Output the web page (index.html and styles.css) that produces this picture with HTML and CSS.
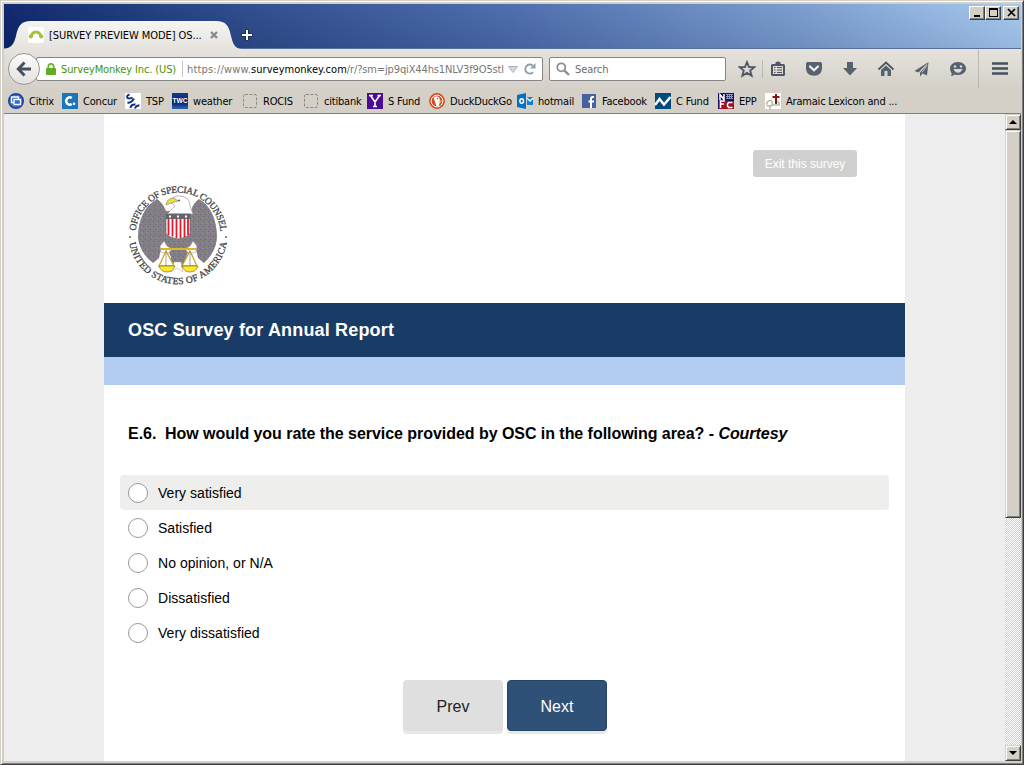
FILE: index.html
```html
<!DOCTYPE html>
<html lang="en">
<head>
<meta charset="utf-8">
<title>OSC Survey for Annual Report</title>
<link rel="stylesheet" href="styles.css">
</head>
<body>
<div class="window">
  <header class="titlebar">
    <div class="tab">
      <svg class="tab-shape" viewBox="0 0 240 28" width="240" height="28"><defs><linearGradient id="tabfill" x1="0" y1="0" x2="0" y2="1"><stop offset="0" stop-color="#f6f5f3"/><stop offset="1" stop-color="#e6e3de"/></linearGradient></defs><path d="M0 28C9 28 12 23 14 15C16 5 19 0 29 0H214C224 0 227 5 229 15C231 23 233 28 240 28Z" fill="url(#tabfill)"/></svg>
      <svg class="tab-icon" viewBox="0 0 16 16" width="16" height="16"><rect width="16" height="16" rx="2" fill="#fff"/><path d="M3 10.500C3.500 3 12.500 3 13 10.500" fill="none" stroke="#a6bf3b" stroke-width="3"/><circle cx="2.700" cy="9.500" r="2" fill="#a6bf3b"/><circle cx="13.300" cy="9.500" r="2" fill="#a6bf3b"/></svg>
      <span class="tab-title">[SURVEY PREVIEW MODE] OS...</span>
      <svg class="tab-close" viewBox="0 0 8 8" width="8" height="8"><path d="M1 1L7 7M7 1L1 7" stroke="#858a8e" stroke-width="2.400"/></svg>
    </div>
    <svg class="new-tab" viewBox="0 0 12 12" width="12" height="12"><path d="M6 .5V11.500M.5 6H11.500" stroke="#1b2c50" stroke-width="4"/><path d="M6 1V11M1 6H11" stroke="#fff" stroke-width="2"/></svg>
    <div class="controls">
      <span class="ctl"><svg viewBox="0 0 12 10" width="12" height="10"><path d="M2 7H8V9H2Z"/></svg></span>
      <span class="ctl"><svg viewBox="0 0 12 10" width="12" height="10"><path d="M1 0H10V9H1ZM2 2V8H9V2Z" fill-rule="evenodd"/></svg></span>
      <span class="ctl ctl-close"><svg viewBox="0 0 12 10" width="12" height="10"><path d="M2 1L9 8M9 1L2 8" stroke="#000" stroke-width="1.700"/></svg></span>
    </div>
  </header>

  <nav class="navbar">
    <button class="back"><svg viewBox="0 0 16 16" width="16" height="16"><path d="M8.500 1.500L2.300 8L8.500 14.500M3 8H15" fill="none" stroke="#49535c" stroke-width="3"/></svg></button>
    <div class="address">
      <svg class="lock" viewBox="0 0 10 12" width="10" height="12"><path d="M2.300 6V3.600a2.700 2.700 0 0 1 5.400 0V6" fill="none" stroke="#6cae2e" stroke-width="1.700"/><rect y="5" width="10" height="7" rx="1" fill="#62ac25"/></svg>
      <span class="identity">SurveyMonkey Inc. (US)</span>
      <span class="url"><span class="scheme">https://www.</span><b class="host">surveymonkey.com</b><span class="path">/r/?sm=jp9qiX44hs1NLV3f9O5stl</span></span>
      <svg class="drop" viewBox="0 0 10 7" width="10" height="7"><path d="M.5.5H9.500L5 6.500Z" fill="#d3d8dd" stroke="#aab2b9"/></svg>
      <svg class="reload" viewBox="0 0 12 12" width="12" height="12"><path d="M9 9.300A4.500 4.500 0 1 1 8.600 2.500" fill="none" stroke="#93a0ac" stroke-width="2"/><path d="M11.500 0V5.500H6Z" fill="#93a0ac"/></svg>
    </div>
    <div class="search">
      <svg viewBox="0 0 14 14" width="14" height="14"><circle cx="5.300" cy="5.300" r="4" fill="none" stroke="#8e8e8e" stroke-width="1.800"/><path d="M8.300 8.300L13 13" stroke="#8e8e8e" stroke-width="2.400"/></svg>
      <span>Search</span>
    </div>
    <div class="tools">
      <svg viewBox="0 0 18 18"><path d="M9 2L11 7L16.300 7.200L12.200 10.500L13.700 15.800L9 12.900L4.300 15.800L5.800 10.500L1.700 7.200L7 7Z" fill="none" stroke="#4d5863" stroke-width="1.800"/></svg>
      <i class="rule rule-star"></i>
      <svg viewBox="0 0 18 18"><path d="M2 5.500Q2 4 3.500 4H6.500V2.500Q9 .5 11.500 2.500V4H14.500Q16 4 16 5.500V14.500Q16 16 14.500 16H3.500Q2 16 2 14.500ZM4 6V14H14V6Z" fill="#4d5863" fill-rule="evenodd"/><path d="M5 7.500H6.500M8 7.500H13M5 10H6.500M8 10H13M5 12.500H6.500M8 12.500H13" stroke="#4d5863" stroke-width="1.200"/></svg>
      <svg viewBox="0 0 18 18"><path d="M2.500 2H15.500Q17 2 17 3.500V8.500Q16.500 15.500 9 15.800Q1.500 15.500 1 8.500V3.500Q1 2 2.500 2Z" fill="#56626e"/><path d="M5 6.500L9 10.300L13 6.500" fill="none" stroke="#f1f0ed" stroke-width="2.200" stroke-linecap="round"/></svg>
      <svg viewBox="0 0 18 18"><path d="M6 2H12V8H16L9 15.500L2 8H6Z" fill="#56626e"/></svg>
      <svg viewBox="0 0 18 18"><path d="M1.500 9.500L9 2.500L16.500 9.500" fill="none" stroke="#4d5863" stroke-width="1.800"/><path d="M4 10L9 5.500L14 10V16H10.500V11H7.500V16H4Z" fill="#56626e"/></svg>
      <svg viewBox="0 0 18 18"><path d="M15.500 2L1.500 11L5.500 12.500Z" fill="#56626e"/><path d="M15.500 2L7 12.500V16.500L9.500 13.500L14 15.500Z" fill="#56626e"/><path d="M14 4.500L6.500 12.500M14 5.500L9 12.500" fill="none" stroke="#dedbd5" stroke-width=".8"/></svg>
      <svg viewBox="0 0 18 18"><path d="M9 2C14 2 17 5 17 8.500S14 15 9 15Q7 15 5.500 14.500Q4 16 2 16Q3 14.500 2.500 13Q1 11.500 1 8.500C1 5 4 2 9 2Z" fill="#56626e"/><circle cx="6" cy="6.500" r="1.200" fill="#dedbd5"/><circle cx="12" cy="6.500" r="1.200" fill="#dedbd5"/><path d="M4.500 9H13.500Q12 12.700 9 12.700T4.500 9Z" fill="#dedbd5"/></svg>
      <i class="rule rule-menu"></i>
      <svg viewBox="0 0 18 18"><path d="M1 3.500H17M1 8.500H17M1 13.500H17" stroke="#44525f" stroke-width="2.600"/></svg>
    </div>
  </nav>

  <div class="bookmarks">
    <a class="mark"><svg viewBox="0 0 16 16"><circle cx="8" cy="8" r="7.300" fill="#3468cf" stroke="#1b3f99" stroke-width="1.400"/><path d="M3.500 4H10.500V9.500H3.500Z" fill="#3468cf" stroke="#fff" stroke-width="1.300"/><path d="M6 6.500H12.500V11.500H6Z" fill="#3468cf" stroke="#fff" stroke-width="1.300"/></svg><span>Citrix</span></a>
    <a class="mark"><svg viewBox="0 0 16 16"><rect width="16" height="16" fill="#1b75bc"/><path d="M9.800 5A3.600 3.600 0 1 0 9.800 11" fill="none" stroke="#fff" stroke-width="2.400"/><circle cx="12" cy="10.700" r="1.300" fill="#fff"/></svg><span>Concur</span></a>
    <a class="mark"><svg viewBox="0 0 16 16"><rect width="16" height="16" fill="#fff"/><path d="M4.500 1.500Q1 2.500 2.500 5Q5 6 7.500 4.500M2.500 9.500Q6 10.500 9 5.500" fill="none" stroke="#12318a" stroke-width="2"/><path d="M5.500 15Q6 11 10.500 11.500M10 15.500Q11 12 14.500 12.500" fill="none" stroke="#12318a" stroke-width="2"/></svg><span>TSP</span></a>
    <a class="mark"><svg viewBox="0 0 16 16"><defs><linearGradient id="twc" x1="0" y1="0" x2="0" y2="1"><stop offset="0" stop-color="#123a8c"/><stop offset=".6" stop-color="#062269"/><stop offset="1" stop-color="#2d68bb"/></linearGradient></defs><rect width="16" height="16" fill="url(#twc)"/><text x=".5" y="10" textLength="15" lengthAdjust="spacingAndGlyphs" class="glyph-twc">TWC</text></svg><span>weather</span></a>
    <a class="mark"><svg viewBox="0 0 16 16"><rect x="1.500" y="1.500" width="13" height="13" rx="1.500" class="blank"/></svg><span>ROCIS</span></a>
    <a class="mark"><svg viewBox="0 0 16 16"><rect x="1.500" y="1.500" width="13" height="13" rx="1.500" class="blank"/></svg><span>citibank</span></a>
    <a class="mark"><svg viewBox="0 0 16 16"><rect width="16" height="16" fill="#4a0c94"/><path d="M3.500 2.500L8 9L12.500 2.500M8 8.500V14M2 2.500H6M10.500 2.500H14M6 13.500H10" fill="none" stroke="#fff" stroke-width="1.600"/></svg><span>S Fund</span></a>
    <a class="mark"><svg viewBox="0 0 16 16"><circle cx="8" cy="8" r="7.200" fill="#de4b26" stroke="#d94922" stroke-width="1.500"/><circle cx="8" cy="8" r="5.900" fill="none" stroke="#fff"/><path d="M4.500 4.500Q8 2 10.500 5L11 8L10 13H7.500Z" fill="#fff"/><path d="M9 8L13 7.500L12 9.500Z" fill="#f5c51c"/><path d="M9.500 11L12 10.500V13Z" fill="#48a64b"/><circle cx="8.700" cy="5.600" r=".7" fill="#24518a"/></svg><span>DuckDuckGo</span></a>
    <a class="mark"><svg viewBox="0 0 16 16"><path d="M0 2L9 0V16L0 14Z" fill="#0072c6"/><rect x="10" y="4" width="6" height="8" fill="#0f82d2"/><path d="M10 5L13 8L16 5" fill="none" stroke="#fff" stroke-width="1.300"/><ellipse cx="4.700" cy="8" rx="1.800" ry="2.300" fill="none" stroke="#fff" stroke-width="1.500"/></svg><span>hotmail</span></a>
    <a class="mark"><svg viewBox="0 0 16 16"><rect x="1" y="1" width="14" height="14" fill="#4660a0"/><path d="M13 4H11.500Q10 4 10 6V15M7.500 8.500H13" fill="none" stroke="#fff" stroke-width="2"/></svg><span>Facebook</span></a>
    <a class="mark"><svg viewBox="0 0 16 16"><rect width="16" height="16" fill="#004b7e"/><path d="M0 12L4.500 6L9 11.500L15.500 4" fill="none" stroke="#fff" stroke-width="2.500"/></svg><span>C Fund</span></a>
    <a class="mark"><svg viewBox="0 0 16 16"><rect width="16" height="16" fill="#16105f"/><path d="M8 1H15V6H8Z" fill="#8f95c9"/><path d="M8 2.500H15M8 4.500H15" stroke="#16105f" stroke-dasharray="1 1"/><path d="M1 7H8V16H1ZM8 8H16V16H8Z" fill="#9e1022"/><path d="M2 7V1.500L6 6.500V1M2.500 15V8H6.500M2.500 11H6M14.500 9.500H10.500L9.500 11V13L10.500 14.500H14.500" fill="none" stroke="#fff" stroke-width="1.500"/></svg><span>EPP</span></a>
    <a class="mark"><svg viewBox="0 0 16 16"><rect width="16" height="16" fill="#fff"/><path d="M2 12Q1 9 4 8Q6 6 7 9T6 13H2M7 12H14Q15 10 12 8M5 13V16" fill="none" stroke="#bbbd98" stroke-width="1.600"/><path d="M11 1V11M7.500 4H14.500" stroke="#8d1116" stroke-width="2"/></svg><span>Aramaic Lexicon and ...</span></a>
  </div>

  <div class="viewport">
    <main class="page">
      <div class="top">
        <button class="exit"><span>Exit this survey</span></button>
        <svg class="seal" viewBox="0 0 116 115" width="116" height="115">
          <defs>
            <path id="arc-top" d="M15.500 57A42.500 42.500 0 0 1 100.500 57"/>
            <path id="arc-low" d="M8.800 57A49.200 49.200 0 0 0 107.200 57"/>
            <pattern id="speck" width="5" height="5" patternUnits="userSpaceOnUse"><rect width="5" height="5" fill="#828084"/><path d="M0 1.500h1M3 3.500h1" stroke="#795f8a"/><path d="M2 .5h1M1 4.500h1" stroke="#8b8d84"/></pattern>
          </defs>
          <text class="ring"><textPath href="#arc-top" startOffset="4" textLength="126">OFFICE OF SPECIAL COUNSEL</textPath></text>
          <text class="ring"><textPath href="#arc-low" startOffset="8" textLength="139">UNITED STATES OF AMERICA</textPath></text>
          <circle cx="10" cy="59" r=".9" fill="#555"/><circle cx="106" cy="59" r=".9" fill="#555"/>
          <path d="M46 33Q43 25 37 21Q18 32 18 60Q20 75 33 85L39 80L42 67L46 62H70L75 67L78 80L84 85Q97 73 97 58Q96 31 79 21Q73 25 71 33Z" fill="url(#speck)"/>
          <path d="M42 61H75L70 70L66 79L69 90H48L51 79L47 70Z" fill="url(#speck)"/>
          <path d="M54 84L51 94L57 90L63 94L61 84Z" fill="#fff" stroke="#aaa" stroke-width=".5"/>
          <path d="M50 24Q53 17 60 18Q70 19 70 28L73 36H47L55 28Z" fill="#fff" stroke="#999" stroke-width=".7"/>
          <path d="M46 27Q47 20 54 20L58 23L51 25Z" fill="#f3df31" stroke="#777" stroke-width=".6"/>
          <circle cx="59" cy="22.500" r=".9" fill="#444"/>
          <path d="M46 36H70V56Q66 60 58 61Q50 60 46 56Z" fill="#fff" stroke="#666" stroke-width=".7"/>
          <path d="M46 36H70V41H46Z" fill="#66636b"/><path d="M49 38.500H68" stroke="#fff" stroke-width="2" stroke-dasharray="2 6"/>
          <path d="M48.500 41V57M52.500 41V58.500M56.500 41V60M60.500 41V60M64.500 41V59M68 41V57" stroke="#e21c2e" stroke-width="1.800"/>
          <path d="M40 68L44 63L47 68L52 71L48 76L41 74ZM77 68L73 63L70 68L65 71L69 76L76 74Z" fill="#fff" stroke="#888" stroke-width=".5"/>
          <path d="M41 71H76" stroke="#ddb91e" stroke-width="2"/>
          <path d="M46 73L39 88H54ZM70 73L62 88H77Z" fill="#fff" stroke="#c9a52a" stroke-width="1.300"/>
          <path d="M46 73V88M70 73V88" stroke="#8d8a84" stroke-width=".8"/>
          <path d="M39 88H55Q53 94 47 94T39 88ZM62 88H78Q76 94 70 94T62 88Z" fill="#ffe829" stroke="#817117" stroke-width=".7"/>
        </svg>
      </div>
      <h1 class="survey-title"><span>OSC Survey for Annual Report</span></h1>
      <div class="progress"></div>
      <h2 class="question"><span>E.6.&nbsp; How would you rate the service provided by OSC in the following area? - <em>Courtesy</em></span></h2>
      <div class="options">
        <label class="option hover"><i></i><span>Very satisfied</span></label>
        <label class="option"><i></i><span>Satisfied</span></label>
        <label class="option"><i></i><span>No opinion, or N/A</span></label>
        <label class="option"><i></i><span>Dissatisfied</span></label>
        <label class="option"><i></i><span>Very dissatisfied</span></label>
      </div>
      <div class="actions"><button class="prev">Prev</button><button class="next">Next</button></div>
    </main>
    <aside class="scrollbar">
      <span class="bevel arrow"><svg viewBox="0 0 8 4" width="8" height="4"><path d="M0 4L4 0L8 4Z"/></svg></span>
      <span class="bevel thumb"></span>
      <span class="track"></span>
      <span class="bevel arrow"><svg viewBox="0 0 8 4" width="8" height="4"><path d="M0 0L4 4L8 0Z"/></svg></span>
    </aside>
  </div>
</div>
</body>
</html>
```
FILE: styles.css
```css
* { box-sizing: border-box; }
body { margin: 0; overflow: hidden; }
button { font: inherit; padding: 0; border: 0; }
svg { display: block; flex: none; }
h1, h2 { margin: 0; }

.window {
  width: 1024px; height: 765px;
  display: flex; flex-direction: column;
  padding: 3px 2px 3px 3px;
  background: #d4d0c8;
  border: 1px solid;
  border-color: #d4d0c8 #404040 #404040 #d4d0c8;
  box-shadow: inset 1px 1px #fff, inset -1px -1px #808080;
  font: 11px "DejaVu Sans Condensed", "DejaVu Sans", sans-serif;
  font-stretch: condensed;
}

/* title bar */
.titlebar {
  height: 45px; flex: none;
  display: flex; align-items: flex-end;
  background: linear-gradient(rgba(255,255,255,.03), rgba(0,0,40,.09)), linear-gradient(97deg, #0a246a 0%, #2d4c8b 25%, #4b6bab 50%, #799bce 78%, #a6caf0 100%);
  border-bottom: 1px solid #566f9c;
}
.tab { position: relative; display: flex; align-items: center; width: 240px; height: 28px; padding-left: 26px; margin: 0 -1px -1px -2px; }
.tab-shape { position: absolute; left: 0; top: 0; }
.tab-icon, .tab-title, .tab-close { position: relative; }
.tab-title { margin-left: 5px; width: 152px; white-space: nowrap; letter-spacing: -.07px; }
.tab-close { margin-left: 9px; }
.new-tab { margin: 0 0 7px 0; }
.controls { display: flex; align-self: flex-start; margin: 2px 2px 0 auto; }
.ctl { width: 16px; height: 14px; padding: 1px 2px; background: #d4d0c8; border: 1px solid; border-color: #fff #404040 #404040 #fff; box-shadow: inset -1px -1px #808080; }
.ctl-close { margin-left: 2px; }

/* navigation bar */
.navbar { height: 40px; flex: none; display: flex; align-items: center; padding-left: 4px; background: linear-gradient(#e6e3de, #d4d0c8); }
.back { position: relative; z-index: 1; width: 32px; height: 32px; flex: none; display: grid; place-items: center; border-radius: 50%; border: 1px solid #96989b; background: linear-gradient(#fcfcfb, #e4e2de); }
.address { width: 507px; height: 24px; margin-left: -4px; padding-left: 9px; display: flex; align-items: center; background: #fff; border: 1px solid #858585; border-radius: 2px; white-space: nowrap; color: #777; }
.identity { width: 122px; height: 16px; line-height: 17px; margin-left: 5px; letter-spacing: -.13px; color: #3f9300; border-right: 1px solid #c8c5be; }
.url { width: 318px; height: 16px; line-height: 17px; margin-left: 4px; display: flex; overflow: hidden; }
.scheme { letter-spacing: .18px; }
.host { font-weight: normal; letter-spacing: .03px; color: #000; }
.path { width: 157px; overflow: hidden; letter-spacing: -.13px; }
.drop { margin-left: 3px; }
.reload { margin-left: 6px; }
.search { width: 177px; height: 24px; margin-left: 6px; padding-left: 6px; display: flex; align-items: center; gap: 5px; background: #fff; border: 1px solid #858585; border-radius: 2px; color: #6b6b6b; }
.search span { padding-top: 1px; letter-spacing: -.1px; }
.tools { display: grid; grid-template-columns: 24px 7px 36px 36px 36px 36px 36px 29px 13px 18px; align-items: center; margin-left: 12px; height: 40px; }
.tools svg { width: 18px; height: 18px; }
.rule { width: 1px; background: #bab7b0; }
.rule-star { height: 18px; }
.rule-menu { height: 38px; }

/* bookmarks */
.bookmarks { height: 25px; flex: none; display: grid; grid-template-columns: 54px 63px 47px 70px 61px 64px 62px 88px 64px 74px 63px 47px 140px; align-items: center; padding-left: 4px; border-bottom: 1px solid #808080; }
.mark { display: flex; align-items: center; gap: 5px; white-space: nowrap; letter-spacing: -.2px; }
.mark span { padding-top: 1px; }
.mark svg { width: 16px; height: 16px; }
.blank { fill: none; stroke: #8d8a84; stroke-dasharray: 3 1.500; }
.glyph-twc { font: bold 7px "Liberation Sans", sans-serif; letter-spacing: 0; fill: #fff; }

/* survey page */
.viewport { flex: 1; min-height: 0; display: flex; background: #eee; }
.page { width: 801px; margin-left: 100px; background: #fff; font-family: "Liberation Sans", sans-serif; font-stretch: normal; }
.top { height: 189px; padding: 36px 48px 0 16px; display: flex; flex-direction: column; }
.exit { align-self: flex-end; width: 104px; height: 27px; border-radius: 3px; background: #d0d0d0; color: #fff; font-size: 12px; }
.seal { margin-top: 1px; }
.ring { font: 9.500px "Liberation Serif", serif; fill: #444; stroke: #444; stroke-width: .3; }
.survey-title { height: 54px; padding-left: 24px; line-height: 54px; background: #183c66; color: #fff; font-size: 18px; letter-spacing: .17px; }
.progress { height: 28px; background: #b3cdf2; }
.question { height: 90px; padding: 39px 0 0 24px; font-size: 16px; line-height: 20px; letter-spacing: -.045px; white-space: nowrap; }
.options { padding: 0 16px; }
.option { height: 35px; padding-left: 8px; display: flex; align-items: center; gap: 10px; border-radius: 4px; font-size: 14px; letter-spacing: .03px; }
.option.hover { background: #eeeeed; }
.option i { width: 20px; height: 20px; border: 1px solid #999; border-radius: 50%; background: #fff; }
.actions { display: flex; justify-content: center; gap: 4px; margin-top: 30px; padding-left: 1px; }
.actions button { width: 100px; height: 51px; padding-top: 2px; border-radius: 4px; font-size: 16px; box-shadow: 0 3px #e8e8e8; }
.actions .prev { background: #dfdfdf; color: #222; }
.actions .next { background: #2f5077; color: #fff; border: 1px solid #244466; }

/* scrollbar */
.scrollbar { width: 16px; margin-left: auto; display: flex; flex-direction: column; }
.bevel { background: #d4d0c8; border: 1px solid; border-color: #d4d0c8 #404040 #404040 #d4d0c8; box-shadow: inset 1px 1px #fff, inset -1px -1px #808080; }
.arrow { height: 16px; display: grid; place-items: center; }
.thumb { height: 388px; }
.track { flex: 1; background: repeating-conic-gradient(#fff 0 25%, #d4d0c8 0 50%) 0 0 / 2px 2px; }
```
